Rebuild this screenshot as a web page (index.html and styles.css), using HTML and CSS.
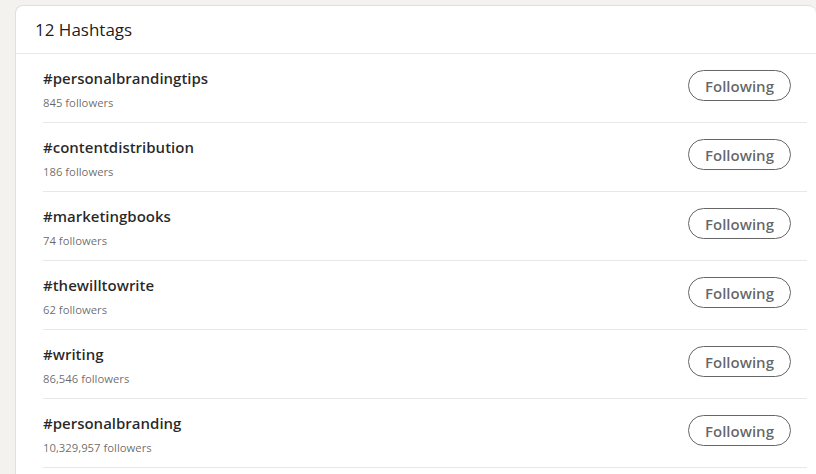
FILE: index.html
```html
<!DOCTYPE html>
<html>
<head>
<meta charset="utf-8">
<link rel="stylesheet" href="styles.css">
</head>
<body>
<div class="card">
  <div class="header">12 Hashtags</div>
  <ul class="list">
    <li class="row"><div class="info"><div class="name">#personalbrandingtips</div><div class="count">845 followers</div></div><button class="btn">Following</button></li>
    <li class="row"><div class="info"><div class="name">#contentdistribution</div><div class="count">186 followers</div></div><button class="btn">Following</button></li>
    <li class="row"><div class="info"><div class="name">#marketingbooks</div><div class="count">74 followers</div></div><button class="btn">Following</button></li>
    <li class="row"><div class="info"><div class="name">#thewilltowrite</div><div class="count">62 followers</div></div><button class="btn">Following</button></li>
    <li class="row"><div class="info"><div class="name">#writing</div><div class="count">86,546 followers</div></div><button class="btn">Following</button></li>
    <li class="row"><div class="info"><div class="name">#personalbranding</div><div class="count">10,329,957 followers</div></div><button class="btn">Following</button></li>
  </ul>
</div>
</body>
</html>
```

FILE: styles.css
```css
html, body {
  margin: 0;
  padding: 0;
  background: #f3f2ef;
  overflow: hidden;
  height: 474px;
}
body {
  padding: 5px 0 0 15px;
  font-family: "Open Sans", "Noto Sans", sans-serif;
  box-sizing: border-box;
}
.card {
  background: #fff;
  width: 801px;
  border: 1px solid #e0dfdc;
  border-right: none;
  border-radius: 8px 8px 0 0;
  box-sizing: border-box;
  height: 480px;
}
.header {
  padding: 12px 20px 11px 19px;
  font-size: 17px;
  line-height: 24px;
  color: rgba(0,0,0,0.9);
  border-bottom: 1px solid #e8e8e8;
}
.list {
  list-style: none;
  margin: 0;
  padding: 0 0 0 27px;
}
.row {
  display: flex;
  justify-content: space-between;
  align-items: flex-start;
  width: 764px;
  padding: 14px 0 11px 0;
  border-bottom: 1px solid #e8e8e8;
}
.name {
  font-size: 15px;
  font-weight: 600;
  line-height: 20px;
  color: rgba(0,0,0,0.85);
}
.count {
  margin-top: 7px;
  font-size: 11.3px;
  line-height: 16px;
  color: rgba(0,0,0,0.6);
}
.btn {
  margin-top: 2px;
  margin-right: 16px;
  width: 103px;
  height: 31px;
  border: 1px solid #666;
  border-radius: 16px;
  background: #fff;
  font-family: "Open Sans", "Noto Sans", sans-serif;
  font-size: 15px;
  font-weight: 600;
  color: rgba(0,0,0,0.62);
  padding: 0;
}
```
